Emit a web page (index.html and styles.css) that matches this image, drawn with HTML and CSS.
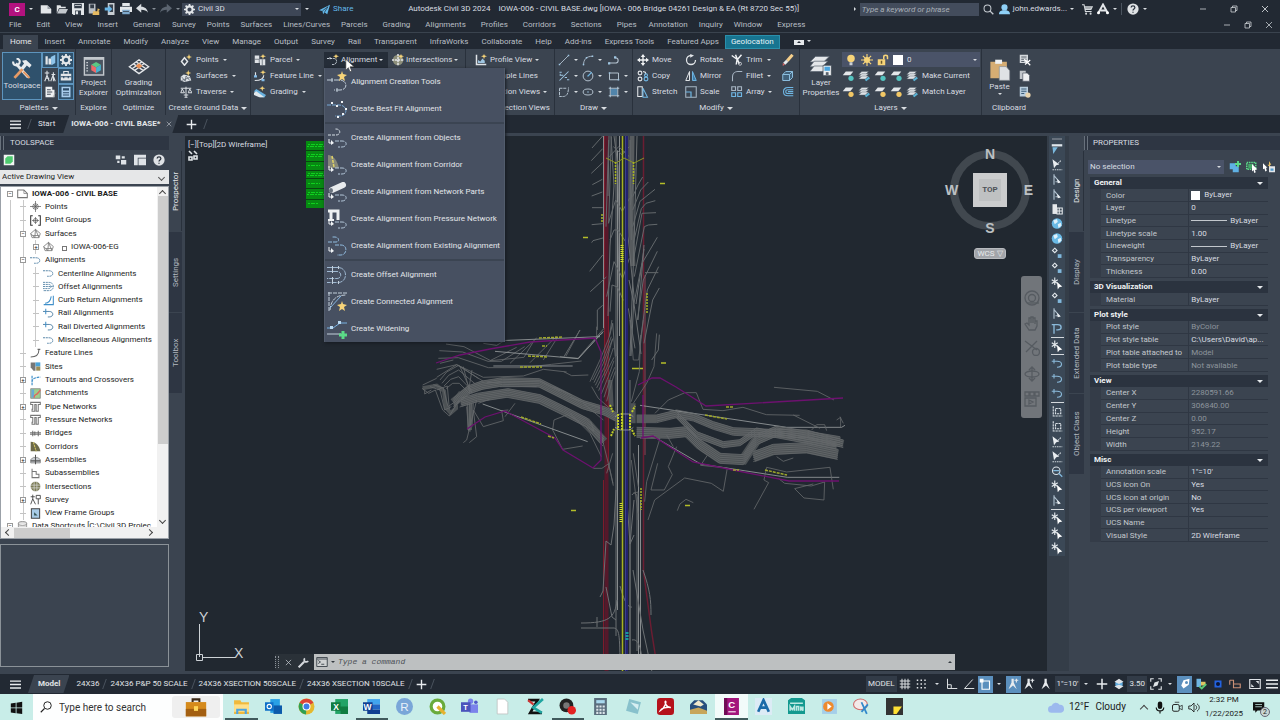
FILE: index.html
```html
<!DOCTYPE html>
<html lang="en">
<head>
<meta charset="utf-8">
<title>Autodesk Civil 3D 2024 - IOWA-006 - CIVIL BASE.dwg</title>
<link rel="stylesheet" href="styles.css">
</head>
<body>
<svg class="sprite" aria-hidden="true">
  <defs>
    <symbol id="new" viewBox="0 0 16 16"><path fill="#e3e6e9" d="M1 3h9l5 5v6H1z"/><path fill="#9aa1a9" d="M10 3v5h5z"/></symbol>
    <symbol id="open" viewBox="0 0 16 16"><path fill="#e3e6e9" d="M1 14V3h5l1 2h6v2H4z"/><path fill="#c3c8cd" d="M4.500 8H16l-3 6H1.500z"/></symbol>
    <symbol id="save" viewBox="0 0 16 16"><path fill="#e3e6e9" d="M0 0h16v16H2l-2-2z"/><path fill="#333c48" d="M3 1h10v6H3zM4 10h8v6H4z"/><path fill="#e3e6e9" d="M5 11h3v4H5zM4 3h8v1H4z"/></symbol>
    <symbol id="saveas" viewBox="0 0 16 16"><path fill="#b9bec4" d="M1 1h9v13H1z"/><path fill="#333c48" d="M3 2h5v5H3z"/><path fill="#e6ba62" d="M7 11h8v5H6zM13 7l3 2-4 3z"/></symbol>
    <symbol id="phone" viewBox="0 0 16 16"><path fill="#c8cdd2" d="M5 0h9v16H5z"/><path fill="#39434f" d="M7 2h5v10H7z"/><path fill="#69b6e8" d="M1 6h5V3l5 5-5 5v-3H1z"/></symbol>
    <symbol id="print" viewBox="0 0 16 16"><path fill="#e3e6e9" d="M3 0h10v5H3zM0 5h16v7H0z"/><path fill="#7ea9cc" d="M3 9h10v6H3z"/><path fill="#333c48" d="M3 4h10v1H3zM4 11h8v1H4z"/></symbol>
    <symbol id="undo" viewBox="0 0 16 16"><path fill="currentColor" d="M0 7l7-6v4c5 0 8 3 9 8-2-3-5-4-9-4v4z"/></symbol>
    <symbol id="redo" viewBox="0 0 16 16"><path fill="currentColor" d="M16 7L9 1v4C4 5 1 8 0 13c2-3 5-4 9-4v4z"/></symbol>
    <symbol id="gear" viewBox="0 0 16 16"><circle cx="8" cy="8" r="4.500" fill="none" stroke="#e3e6e9" stroke-width="3"/><path stroke="#e3e6e9" stroke-width="2.500" d="M8 0v3M8 13v3M0 8h3M13 8h3M2.300 2.300l2 2M11.700 11.700l2 2M2.300 13.700l2-2M11.700 4.300l2-2"/></symbol>
    <symbol id="plane" viewBox="0 0 16 16"><path fill="#62b8ea" d="M0 9L16 1l-4 14-4-3-2 3-1-5z"/><path stroke="#222933" d="M5 10l8-6-5 8" fill="none"/></symbol>
    <symbol id="find" viewBox="0 0 16 16"><circle cx="6.500" cy="6.500" r="5" fill="none" stroke="currentColor" stroke-width="1.500"/><path stroke="currentColor" stroke-width="2" d="M10 10l5 5"/></symbol>
    <symbol id="user" viewBox="0 0 16 16"><circle cx="8" cy="5" r="4.500" fill="#8fd0f7"/><path fill="#8fd0f7" d="M0 15c0-5 3-5 5-6h6c2 1 5 1 5 6z"/></symbol>
    <symbol id="cart" viewBox="0 0 16 16"><path fill="none" stroke="#d5d9dd" stroke-width="1.600" d="M0 1h3l2 10h9M4 4h11l-2 4H5M4 6h10"/><circle cx="6" cy="14" r="1.500" fill="#d5d9dd"/><circle cx="12.500" cy="14" r="1.500" fill="#d5d9dd"/></symbol>
    <symbol id="adsk" viewBox="0 0 16 16"><path fill="none" stroke="#e3e6e9" stroke-width="2.600" d="M2 13L8 2l6 11M5 10h7"/><circle cx="2" cy="13" r="2" fill="#fff"/><circle cx="14" cy="13" r="2" fill="#fff"/></symbol>
    <symbol id="help" viewBox="0 0 16 16"><circle cx="8" cy="8" r="7.500" fill="#dfe2e5"/><path fill="none" stroke="#2b333e" stroke-width="1.700" d="M5.500 6c0-3 5-3 5 0 0 2-2.500 2-2.500 4M8 11.500v1.500"/></symbol>
    <symbol id="min" viewBox="0 0 16 16"><path stroke="#d5d9dd" stroke-width="1.500" d="M2 8h12"/></symbol>
    <symbol id="max" viewBox="0 0 16 16"><path fill="none" stroke="#d5d9dd" stroke-width="1.500" d="M2 5h9v9H2zM5 5V2h9v9h-3"/></symbol>
    <symbol id="x" viewBox="0 0 16 16"><path stroke="currentColor" stroke-width="1.700" d="M2 2l12 12M14 2L2 14"/></symbol>
    <symbol id="tools" viewBox="0 0 32 32"><path stroke="#e8ebee" stroke-width="4" d="M7 8l18 20"/><path stroke="#e59a66" stroke-width="4" d="M5 29l12-13"/><path fill="#e8ebee" d="M16 4l6-1 8 7-3 4-4-3-5 6-4-3 5-6z"/><path fill="none" stroke="#e8ebee" stroke-width="3" d="M3 5c0 6 5 7 8 4s2-8-3-8"/><path stroke="#e59a66" stroke-width="3" d="M18 20l9 9"/></symbol>
    <symbol id="pal1" viewBox="0 0 16 16"><path fill="#e3e6e9" d="M2 3h3v11H2zM6 6h4v8H6z"/><path fill="#8fc4ea" d="M9 4l6-3v11l-5 3z"/></symbol>
    <symbol id="survey" viewBox="0 0 16 16"><path fill="none" stroke="#dfe3e7" stroke-width="1.400" d="M1 4h6M4 1v6M1 15l3-8 3 8M10 6h5M12.500 3v12M9 15l3-8 3 8M2 11h5"/></symbol>
    <symbol id="case" viewBox="0 0 16 16"><path fill="#e3e6e9" d="M1 5h14v9H1z"/><path fill="none" stroke="#e3e6e9" stroke-width="1.500" d="M5 5V2h6v3"/><path stroke="#2b4b68" stroke-width="1.500" d="M1 9h14M5 8v3M11 8v3"/></symbol>
    <symbol id="sheet" viewBox="0 0 16 16"><path fill="#eef0f2" d="M2 1h9v4h3v10H2z"/><path stroke="#434c58" stroke-width="1.300" d="M4 5h5M4 8h7M4 11h5"/><path stroke="#aaa" d="M12 15l3-6"/></symbol>
    <symbol id="calc" viewBox="0 0 16 16"><path fill="#a9cdec" d="M2 1h12v14H2z"/><path fill="#2c4a66" d="M4 3h8v3H4z"/><path stroke="#2c4a66" stroke-width="1.500" d="M4 9h8M4 12h8"/></symbol>
    <symbol id="cube" viewBox="0 0 32 32"><path fill="#4b5561" stroke="#c3c8cd" stroke-width="2" d="M2 4h28v25H2z"/><path fill="#c3c8cd" d="M2 3h28v4H2z"/><path stroke="#dfe3e7" stroke-width="2" stroke-dasharray="2 2" d="M6 10v16"/><path fill="#5bc884" d="M12 14l7-4 7 4-7 4z"/><path fill="#ed6a6a" d="M12 14l7 4v8l-7-4z"/><path fill="#48b2cf" d="M26 14l-7 4v8l7-4z"/></symbol>
    <symbol id="grade" viewBox="0 0 32 32"><path fill="none" stroke="#e4e7ea" stroke-width="2" d="M2 17L16 7l14 10-14 10zM8 13l15 10M24 12L9 23M12 10l14 10M20 10L6 20"/><path fill="#e88f55" d="M16 12l5 4-5 4-5-4z"/></symbol>
    <symbol id="points" viewBox="0 0 16 16"><path fill="none" stroke="#e3e6e9" stroke-width="2" d="M6 5l4 5-4 5-4-5z"/><path fill="#f7d479" d="M12 0l1 3 3 1-3 1-1 3-1-3-3-1 3-1z"/></symbol>
    <symbol id="surf" viewBox="0 0 16 16"><path fill="#dfe3e7" d="M1 9l4-3 8 2 2 6-9 2-5-2z"/><path stroke="#59626e" fill="none" d="M2 9l5 6 1-7 5 6M2 14l11-4"/><path fill="#f7d479" d="M11 0l1 3 3 1-3 1-1 3-1-3-3-1 3-1z"/></symbol>
    <symbol id="trav" viewBox="0 0 16 16"><path fill="none" stroke="#dfe3e7" stroke-width="1.300" d="M1 3h14M8 1v14M3 4L1 9h5zM13 4l-2 5h5zM5 12h6M6 15h4"/></symbol>
    <symbol id="parcel" viewBox="0 0 16 16"><path fill="#dfe3e7" d="M1 2h6v5h8v8H8v-3H1z"/><path stroke="#59626e" d="M1 7h6v5M11 7v8" fill="none"/><path fill="#f7d479" d="M12 0l1 2 3 1-3 1-1 3-1-3-3-1 3-1z"/></symbol>
    <symbol id="feat" viewBox="0 0 16 16"><path fill="none" stroke="#dfe3e7" stroke-width="1.500" d="M2 3v5M1 14c8 0 12-3 12-7"/><path fill="#84bdea" d="M0 7h4v3H0zM10 12h4v3h-4z"/><path fill="#f7d479" d="M12 0l1 2 3 1-3 1-1 3-1-3-3-1 3-1z"/></symbol>
    <symbol id="grading" viewBox="0 0 16 16"><path fill="#69b2df" d="M0 7l3-3 13 8-2 3H8z"/><path fill="#e1e8ec" d="M0 9l3-2 11 8H7L0 12z"/><path fill="#f7d479" d="M11 0l1 2 3 1-3 1-1 3-1-3-3-1 3-1z"/></symbol>
    <symbol id="align" viewBox="0 0 16 16"><path fill="none" stroke="#cdd5dd" stroke-width="1.300" stroke-dasharray="3 1" d="M0 6h9c5 0 5 7 0 8H6M4 4v4"/><path fill="#f7d479" d="M12 0l1 2 3 1-3 1-1 3-1-3-3-1 3-1z"/></symbol>
    <symbol id="inter" viewBox="0 0 16 16"><circle cx="8" cy="8" r="7" fill="#8d8f7b"/><path stroke="#e3e6e9" stroke-width="2" stroke-dasharray="3 1" d="M0 8h16M8 0v16"/><path fill="#f7d479" d="M12 0l1 2 3 1-3 1-1 3-1-3-3-1 3-1z"/></symbol>
    <symbol id="profv" viewBox="0 0 16 16"><path fill="none" stroke="#dfe3e7" stroke-width="2" d="M2 1v13h13"/><path fill="#9fc6e2" d="M4 12V8l3 2 3-4 3 3v3z"/><path fill="#f7d479" d="M12 0l1 2 3 1-3 1-1 3-1-3-3-1 3-1z"/></symbol>
    <symbol id="line" viewBox="0 0 16 16"><path stroke="#a8b6c4" stroke-width="1.300" d="M2 14L14 2"/><path fill="#9fc6e2" d="M1 13h2v2H1zM13 1h2v2h-2z"/></symbol>
    <symbol id="arc" viewBox="0 0 16 16"><path fill="none" stroke="#a8b6c4" stroke-width="1.300" d="M2 15C2 7 6 3 14 3"/><path fill="#9fc6e2" d="M1 13h2v2H1zM5 4h2v2H5zM13 2h2v2h-2z"/></symbol>
    <symbol id="pline" viewBox="0 0 16 16"><path fill="none" stroke="#b5c3d0" stroke-width="1.500" d="M1 12h8c6 0 6-7 0-7"/><path fill="#9fc6e2" d="M0 11h3v3H0zM8 3h3v3H8z"/></symbol>
    <symbol id="rays" viewBox="0 0 16 16"><path fill="none" stroke="#9fc6e2" stroke-width="1.400" d="M2 14L14 2M2 3h3M4 7h3M9 10h3M12 13h3M3 5v3"/></symbol>
    <symbol id="circle" viewBox="0 0 16 16"><circle cx="8" cy="8" r="6.500" fill="none" stroke="#b5c3d0" stroke-width="1.300"/><path stroke="#6fb6e3" stroke-width="1.500" d="M8 8l5-5M7 8h2"/></symbol>
    <symbol id="rect" viewBox="0 0 16 16"><path fill="none" stroke="#b5c3d0" stroke-width="1.300" d="M2 4h12v9H2z"/><path fill="#9fc6e2" d="M1 3h2v2H1zM13 12h2v2h-2z"/></symbol>
    <symbol id="spl" viewBox="0 0 16 16"><path fill="none" stroke="#b5c3d0" stroke-width="1.300" d="M2 3v11h5c6 0 7-7 7-12M2 3h9" stroke-dasharray="4 1"/></symbol>
    <symbol id="ell" viewBox="0 0 16 16"><ellipse cx="8" cy="8" rx="6.500" ry="4" fill="none" stroke="#b5c3d0" stroke-width="1.300"/><circle cx="8" cy="8" r="1" fill="#9fc6e2"/></symbol>
    <symbol id="hatch" viewBox="0 0 16 16"><path fill="#5185ab" d="M4 4h8v8H4z"/><path fill="none" stroke="#bcd2e2" stroke-width="1.200" d="M1 3h14M1 13h14M3 1v14M13 1v14"/></symbol>
    <symbol id="move" viewBox="0 0 16 16"><path stroke="#f0f2f4" stroke-width="1.800" d="M8 2v12M2 8h12"/><path fill="#f0f2f4" d="M8 0l3 4H5zM8 16l3-4H5zM0 8l4-3v6zM16 8l-4-3v6z"/></symbol>
    <symbol id="copy" viewBox="0 0 16 16"><g fill="none" stroke-width="1.500"><circle cx="4" cy="4" r="2.500" stroke="#e3e6e9"/><circle cx="4" cy="12" r="2.500" stroke="#e3e6e9"/><path stroke="#e3e6e9" d="M8 2l3 1 1 3"/><circle cx="12" cy="12" r="2.500" stroke="#6fb6e3"/><circle cx="12" cy="7" r="2" stroke="#6fb6e3"/></g></symbol>
    <symbol id="stretch" viewBox="0 0 16 16"><path fill="none" stroke="#e3e6e9" stroke-width="1.400" d="M1 1h6v13H1zM1 14h6"/><path fill="none" stroke="#6fb6e3" stroke-width="1.400" d="M8 3l6 12H8z"/></symbol>
    <symbol id="rotate" viewBox="0 0 16 16"><path fill="none" stroke="#e3e6e9" stroke-width="1.700" d="M8 2a6 6 0 1 0 6 6"/><path fill="#e3e6e9" d="M7 0l5 2-5 3z"/></symbol>
    <symbol id="mirror" viewBox="0 0 16 16"><path fill="none" stroke="#e3e6e9" stroke-width="1.300" d="M6 2v12H1z"/><path fill="#3f7ba6" stroke="#6fb6e3" stroke-width="1.300" d="M10 2v12h5z"/></symbol>
    <symbol id="scale" viewBox="0 0 16 16"><path fill="none" stroke="#a8b6c4" stroke-width="1.400" d="M1 1h14v14H1z"/><path fill="none" stroke="#6fb6e3" stroke-width="1.600" d="M1 8h7v7"/></symbol>
    <symbol id="trim" viewBox="0 0 16 16"><path fill="none" stroke="#f0f2f4" stroke-width="2" d="M1 2l7 5M6 1l5 12M14 1L8 8l-1 6"/><circle cx="12" cy="13" r="2" fill="none" stroke="#e3e6e9"/></symbol>
    <symbol id="fillet" viewBox="0 0 16 16"><path fill="none" stroke="#a8b6c4" stroke-width="1.400" d="M2 15V9c0-4 3-7 7-7h6"/></symbol>
    <symbol id="array" viewBox="0 0 16 16"><path fill="none" stroke="#a8b6c4" stroke-width="1.500" d="M1 1h5v5H1zM9 1h5v5H9z"/><path fill="none" stroke="#6fb6e3" stroke-width="1.500" d="M1 9h5v5H1zM9 9h5v5H9z"/></symbol>
    <symbol id="erase" viewBox="0 0 16 16"><path stroke="#f5cf8b" stroke-width="4" d="M14 1L7 9"/><path stroke="#e8eaec" stroke-width="4" d="M7 9l-4 4"/><path fill="#d76464" d="M1 12l3 2-3 2z"/></symbol>
    <symbol id="explode" viewBox="0 0 16 16"><path fill="#41617a" stroke="#8dbfe0" stroke-width="1.300" d="M1 6l4-4h9v8l-4 4H1zM1 6h9v8M10 6l4-4"/></symbol>
    <symbol id="offset" viewBox="0 0 16 16"><path fill="none" stroke="#6fb6e3" stroke-width="1.400" d="M15 2H8C0 2 0 13 8 13h7M15 5H8c-4 0-4 5 0 5h7M8 7.500h7"/></symbol>
    <symbol id="layers" viewBox="0 0 32 32"><g fill="#e4e7ea" stroke="#596370"><path d="M8 2h20l-8 8H0z"/><path d="M6 9h20l-8 8H0z"/><path d="M6 16h20l-8 8H0z"/></g><path fill="#eef1f3" stroke="#3b4450" d="M19 15h12v15H19z"/><path fill="#49a4df" d="M21 17h8v6h-8z"/><path fill="#59616c" d="M23 25h4v4h-4z"/></symbol>
    <symbol id="layA" viewBox="0 0 16 16"><g fill="#dfe3e7" stroke="#5a636e" stroke-width=".6"><path d="M5 2h9l-4 4H1z"/><path d="M5 5h9l-4 4H1z"/><path d="M5 8h9l-4 4H1z"/></g><path fill="#5ab3d5" d="M9 13l5-4 2 2-5 4z"/></symbol>
    <symbol id="layB" viewBox="0 0 16 16"><path fill="#e4e7ea" d="M5 2h10l-4 5H1z"/><circle cx="12" cy="11" r="3.500" fill="#54c3c0"/></symbol>
    <symbol id="layC" viewBox="0 0 16 16"><path fill="#e4e7ea" d="M5 2h10l-4 5H1z"/><circle cx="12" cy="11" r="3.500" fill="#f2c765"/></symbol>
    <symbol id="bulb" viewBox="0 0 16 16"><circle cx="8" cy="6" r="5" fill="#f7d479"/><path fill="#c9ced3" d="M6 11h4v4H6z"/></symbol>
    <symbol id="sun" viewBox="0 0 16 16"><circle cx="8" cy="8" r="4" fill="#f7d479"/><path stroke="#f7d479" stroke-width="1.500" d="M8 0v16M0 8h16M2.500 2.500l11 11M13.500 2.500l-11 11"/></symbol>
    <symbol id="lock" viewBox="0 0 16 16"><path fill="#f7d479" d="M1 7h10v8H1z"/><path fill="none" stroke="#f7d479" stroke-width="2" d="M9 7V4c0-3 5-3 5 0v3"/><path fill="#6b5a2a" d="M5 9h2v4H5z"/></symbol>
    <symbol id="paste" viewBox="0 0 32 32"><path fill="#d6ad73" d="M2 4h24v24H2z"/><path fill="#eef0f2" d="M9 1h10v6H9z"/><path fill="#dfe2e5" stroke="#8b8f95" d="M15 11h10l5 6v14H15z"/></symbol>
    <symbol id="cut" viewBox="0 0 16 16"><path fill="#d5d9dd" d="M1 1h11v11H1z"/><path stroke="#49525d" stroke-width="1.200" d="M3 4h7M3 7h7M3 10h4"/><path stroke="#fff" stroke-width="1.600" d="M7 7l8 8M15 8l-7 6"/></symbol>
    <symbol id="docs" viewBox="0 0 16 16"><path fill="#c1c6cb" d="M1 1h8v11H1z"/><path fill="#eef0f2" stroke="#555e69" d="M5 4h6l3 3v8H5z"/></symbol>
    <symbol id="list" viewBox="0 0 16 16"><path fill="#b9cddd" d="M1 1h11v13H1z"/><path stroke="#3b5c78" stroke-width="1.400" d="M3 4h7M3 7h7M3 10h4"/><circle cx="12" cy="12" r="3.500" fill="#e8d3ac"/></symbol>
    <symbol id="burger" viewBox="0 0 16 16"><path stroke="#e8ebee" stroke-width="2" d="M0 3h16M0 8h16M0 13h16"/></symbol>
    <symbol id="plus" viewBox="0 0 16 16"><path stroke="#e8ebee" stroke-width="2" d="M1 8h14M8 1v14"/></symbol>

    <symbol id="m1" viewBox="0 0 20 20" overflow="visible"><path fill="none" stroke="#c3cfdb" stroke-dasharray="6 1" d="M0 8h12c9 0 9 10 1 10H7M5 6v4M10 16v4"/><path fill="#f7d479" d="M15-1l1 3 4 1-3 2 1 4-3-2-3 2 1-4-3-2 4-1z"/></symbol>
    <symbol id="m2" viewBox="0 0 20 20"><path fill="none" stroke="#79a9d6" stroke-dasharray="4 1" d="M0 6h12c9 0 9 11 1 11H8"/><path fill="#f0f3f6" d="M4 3h2v2H4zM9 6h2v2H9zM14 2h2v2h-2zM18 9h2v2h-2zM15 14h2v2h-2zM10 17h2v2h-2z"/></symbol>
    <symbol id="from" viewBox="0 0 20 20"><path fill="none" stroke="#b4c7da" stroke-dasharray="4 1" d="M8 13h7c6 0 5 6 0 6h-4"/><path fill="none" stroke="#f0f3f6" d="M2 11v4h3"/><path fill="#f0f3f6" d="M4 12l3 3-3 2z"/></symbol>
    <symbol id="m3" viewBox="0 0 20 20"><path fill="none" stroke="#d6dee6" stroke-dasharray="3 1" d="M1 7h8c5 0 5-6 0-6H8"/><use href="#from"/></symbol>
    <symbol id="m4" viewBox="0 0 20 20"><path fill="#85877a" d="M1 0c5 0 9 5 11 13H1z"/><path stroke="#e2d465" stroke-dasharray="3 1" d="M5 1l2 11" stroke-width="1.500"/><use href="#from"/></symbol>
    <symbol id="m5" viewBox="0 0 20 20"><path stroke="#e8ebee" stroke-width="6" stroke-linecap="round" d="M5 8l11-5"/><ellipse cx="4" cy="8.500" rx="2" ry="2.500" fill="#69727e"/><use href="#from"/></symbol>
    <symbol id="m6" viewBox="0 0 20 20"><path fill="none" stroke="#eef1f3" stroke-width="3" d="M1 2h10v9M4 2v9"/><path stroke="#eef1f3" stroke-width="2" d="M1 11h6"/><use href="#from"/></symbol>
    <symbol id="m7" viewBox="0 0 20 20"><path fill="none" stroke="#91bce0" stroke-dasharray="4 1" d="M1 6h8c4 0 3-5-1-5H5M8 9h6c7 0 6 10 0 10h-4"/><path fill="none" stroke="#f0f3f6" d="M2 11v4h3"/><path fill="#f0f3f6" d="M4 12l3 3-3 2z"/></symbol>
    <symbol id="m8" viewBox="0 0 20 20"><path fill="none" stroke="#9fb9d2" d="M0 2.500h11c10 0 10 15 0 15H0M0 6.500h10c5 0 5 7 0 7H0" stroke-dasharray="5 1"/><path fill="none" stroke="#c3cfdb" d="M5.500 1v7M5.500 12v7M11.500 1v3M11.500 16v3"/></symbol>
    <symbol id="m9" viewBox="0 0 20 20"><path fill="none" stroke="#c3cfdb" stroke-dasharray="4 1" d="M1 1h19M2 0v19M3 18C4 7 10 3 19 3"/><path stroke="#85b6e1" d="M3 16L14 4"/><path fill="#f7d479" d="M15 9l1 3 4 1-3 2 1 4-3-2-3 2 1-4-3-2 4-1z"/></symbol>
    <symbol id="m10" viewBox="0 0 20 20"><path fill="none" stroke="#78b1e2" d="M0 9h6l7-5h7"/><path stroke="#c3cfdb" d="M0 15h14"/><path fill="#b9d9f2" d="M3 7h3v3H3zM11 2h3v3h-3z"/><path stroke="#5bdb88" stroke-width="3" d="M16 12v8M12 16h8"/></symbol>

    <symbol id="tPt" viewBox="0 0 16 16"><circle cx="8" cy="8" r="4" fill="none" stroke="#555"/><path stroke="#555" d="M8 0v16M0 8h16M5 5l6 6M11 5l-6 6"/></symbol>
    <symbol id="tPg" viewBox="0 0 16 16"><path fill="none" stroke="#333" stroke-width="1.500" d="M4 1H1v14h3M12 1h3v14h-3"/><circle cx="8" cy="8" r="3" fill="none" stroke="#555"/><path stroke="#555" d="M8 3v10M3 8h10"/></symbol>
    <symbol id="tDoc" viewBox="0 0 16 16"><path fill="#fff" stroke="#777" stroke-width="1.500" d="M1 3h9l5 5v6H1z"/><path fill="none" stroke="#777" d="M10 3v5h5"/></symbol>
    <symbol id="tSurf" viewBox="0 0 16 16"><path fill="none" stroke="#777" stroke-width="1.200" d="M1 8l7-6 7 6-2 6H3zM1 8l6 6 1-12 5 12M4 11h9"/></symbol>
    <symbol id="tAl" viewBox="0 0 16 16"><path fill="none" stroke="#47799f" stroke-width="1.300" stroke-dasharray="3 1" d="M0 4h9c7 0 7 8 0 8H6"/></symbol>
    <symbol id="tRail" viewBox="0 0 16 16"><path fill="none" stroke="#47799f" stroke-width="1.300" d="M0 5h9c7 0 7 8 0 8H7"/><path stroke="#3f8fc9" stroke-width="1.500" d="M4 1v8"/></symbol>
    <symbol id="tOff" viewBox="0 0 16 16"><path fill="none" stroke="#47799f" stroke-width="1.200" stroke-dasharray="3 1" d="M0 2h9c8 0 8 12 0 12H0M0 5h8c5 0 5 6 0 6H0M0 8h14"/></symbol>
    <symbol id="tCurb" viewBox="0 0 16 16"><path fill="none" stroke="#3f8fc9" stroke-width="1.500" d="M1 14h14V1M3 12c6 0 8-4 9-10"/></symbol>
    <symbol id="tFeat" viewBox="0 0 16 16"><path fill="none" stroke="#666" stroke-width="1.500" d="M1 13c8 0 12-3 12-11M11 2h4"/></symbol>
    <symbol id="tSite" viewBox="0 0 16 16"><path fill="#777" d="M1 2h7v12H5L1 9z"/><path fill="#4aa3d8" d="M8 2h7v6H8z"/><path fill="#9a8c57" d="M9 8h6v6H9z"/></symbol>
    <symbol id="tTurn" viewBox="0 0 16 16"><path fill="none" stroke="#3f8fc9" stroke-width="1.700" d="M3 1v14M3 10c0-5 4-6 12-7" stroke-dasharray="4 1"/></symbol>
    <symbol id="tCat" viewBox="0 0 16 16"><path fill="#9fce8d" stroke="#777" d="M1 1h14v14H1z"/><path fill="#6aa9d6" d="M2 2h4v12H2z"/><path stroke="#df675f" stroke-width="2" fill="none" d="M6 14c0-6 3-3 5-6l4-5"/></symbol>
    <symbol id="tPipe" viewBox="0 0 16 16"><path fill="none" stroke="#777" stroke-width="1.500" d="M1 2h14v3h-3v10H9V5H7v10H3v-3h1V5H1z"/></symbol>
    <symbol id="tBr" viewBox="0 0 16 16"><path fill="none" stroke="#666" stroke-width="1.400" d="M0 7h16M0 9h16M4 4v8M12 4v8M7 5v6"/></symbol>
    <symbol id="tCor" viewBox="0 0 16 16"><path fill="#6c6a4a" d="M1 1c8 0 13 7 14 14H1z"/><path stroke="#d6c862" stroke-width="1.500" stroke-dasharray="3 1" d="M5 2l4 13"/></symbol>
    <symbol id="tAsm" viewBox="0 0 16 16"><path fill="#c8ccd1" stroke="#777" d="M1 8l4-3h6l4 3v5H1z"/><path stroke="#555" stroke-width="1.500" d="M8 1v14M1 10h14"/></symbol>
    <symbol id="tSub" viewBox="0 0 16 16"><path fill="none" stroke="#777" stroke-width="1.500" d="M3 1v14M3 5h6v4h4v5H3"/></symbol>
    <symbol id="tInt" viewBox="0 0 16 16"><circle cx="8" cy="8" r="7" fill="#7c7c55"/><path stroke="#ddd" d="M0 6h16M0 10h16M6 0v16M10 0v16"/></symbol>
    <symbol id="tSv" viewBox="0 0 16 16"><path fill="none" stroke="#444" stroke-width="1.300" d="M1 4h6M4 1v6M1 15l3-8 4 8M9 2h6v5H9zM12 7v8"/></symbol>
    <symbol id="tVf" viewBox="0 0 16 16"><path fill="#a8cbe6" stroke="#444" stroke-width="1.500" d="M2 1h12v14H2z"/><path fill="#355" d="M6 6l5 5H6z"/></symbol>
    <symbol id="tDb" viewBox="0 0 16 16"><path fill="#ddd" stroke="#777" d="M2 3c0-3 12-3 12 0v12H2zM2 4c0 3 12 3 12 0"/></symbol>

    <symbol id="snapA" viewBox="0 0 16 16"><path fill="#dfe6ec" d="M1 1h14v3H1z"/><path fill="#7ab9df" d="M2 5h7l-6 9z"/></symbol>
    <symbol id="snapB" viewBox="0 0 16 16"><path fill="#e9edf0" d="M2 1l9 7-4 1-3 4z"/><path stroke="#cfd6dc" stroke-dasharray="2 1" stroke-width="1.500" d="M2 15h13M13 3l-5 5"/></symbol>
    <symbol id="snapC" viewBox="0 0 16 16"><path fill="none" stroke="#aebfcd" stroke-width="1.500" d="M4 1v14M4 3l7 8H6"/><path fill="#e9edf0" d="M8 7l5 5-4 1z"/></symbol>
    <symbol id="snapP" viewBox="0 0 16 16"><path fill="none" stroke="#8ab9d9" stroke-width="1.800" d="M1 3h8c6 0 6 7 0 7H7M4 3v12"/></symbol>
    <symbol id="snapD" viewBox="0 0 16 16"><path fill="none" stroke="#e3e8ec" stroke-width="1.500" d="M5 1l3 3-3 3-3-3z"/><path fill="#81b8dc" d="M9 9h5v5H9z"/></symbol>
    <symbol id="snapE" viewBox="0 0 16 16"><path fill="none" stroke="#e3e8ec" stroke-width="1.500" d="M5 0v10M1 3l8 5M9 3L1 8"/><path fill="#fff" d="M8 6l7 6-4 1-2 3z"/></symbol>
    <symbol id="snapF" viewBox="0 0 16 16"><path fill="none" stroke="#8ab9d9" stroke-width="1.500" d="M1 5h7c8 0 8 8 0 8M4 2v6"/></symbol>
    <symbol id="snapG" viewBox="0 0 16 16"><path fill="none" stroke="#dbe2e8" stroke-width="1.500" stroke-dasharray="3 1" d="M3 1v13h12M6 4h7v7H6z"/></symbol>
    <symbol id="snapH" viewBox="0 0 16 16"><circle cx="7" cy="7" r="5" fill="none" stroke="#dbe2e8" stroke-width="1.500"/><path stroke="#81b8dc" stroke-width="1.700" d="M3 7h8M10 10l5 5"/></symbol>
    <symbol id="globe" viewBox="0 0 16 16"><circle cx="8" cy="8" r="7" fill="#69b9e5"/><path fill="#dff1fa" d="M3 4l5-2 1 4-4 3zM9 9l4-2 1 4-4 3z"/></symbol>
    <symbol id="table" viewBox="0 0 16 16"><path fill="#e6e9ec" d="M2 1h6v13H2z"/><path fill="none" stroke="#e6e9ec" stroke-width="1.400" d="M8 6h7v8H8zM8 10h7M11 6v8"/></symbol>

    <symbol id="anno" viewBox="0 0 16 16"><path fill="#e8ebee" d="M6 1h3v5l4 9-5-5-6 5 4-9z"/></symbol>
    <symbol id="annox" viewBox="0 0 16 16"><path fill="#e8ebee" d="M6 1h3v5l4 9-5-5-6 5 4-9z"/><path stroke="#e8ebee" stroke-width="1.500" d="M10 3h5M12.500 1v5"/></symbol>
    <symbol id="tag" viewBox="0 0 16 16"><path fill="#fff" d="M3 10l3-7 8-2-1 8-7 5z"/><circle cx="10" cy="6" r="2" fill="#5b8fbd"/></symbol>
    <symbol id="gridi" viewBox="0 0 16 16"><path stroke="#dfe2e5" stroke-width="1.300" d="M4 1v14M8 1v14M12 1v14M1 4h14M1 8h14M1 12h14"/></symbol>
    <symbol id="dots" viewBox="0 0 16 16"><path stroke="#dfe2e5" stroke-width="2" stroke-dasharray="2 3" d="M1 3h14M1 8h14M1 13h14"/></symbol>
    <symbol id="ortho" viewBox="0 0 16 16"><path fill="none" stroke="#dfe2e5" stroke-width="1.300" d="M2 1v13h13M2 9h5v5"/></symbol>
    <symbol id="polar" viewBox="0 0 16 16"><path fill="none" stroke="#dfe2e5" stroke-width="1.300" d="M13 2L2 14h13"/></symbol>
    <symbol id="osnap" viewBox="0 0 16 16"><path fill="none" stroke="#fff" stroke-width="1.500" d="M4 4h10v11H4z"/><path fill="#fff" d="M1 1h5v5H1z"/></symbol>
  </defs>
</svg>

<header class="titlebar">
  <button class="applogo" aria-label="Application menu">C</button><i class="car"></i>
  <div class="quick">
    <svg class="i"><use href="#new"/></svg><svg class="i"><use href="#open"/></svg><svg class="i"><use href="#save"/></svg><svg class="i"><use href="#saveas"/></svg><svg class="i"><use href="#phone"/></svg><svg class="i"><use href="#print"/></svg>
    <svg class="i"><use href="#undo"/></svg><i class="car dim"></i><svg class="i off"><use href="#redo"/></svg><i class="car dim"></i>
  </div>
  <button class="workspace"><svg class="i"><use href="#gear"/></svg><span>Civil 3D</span><i class="car"></i></button>
  <i class="car"></i>
  <a class="share" href="#"><svg class="i"><use href="#plane"/></svg>Share</a>
  <div class="doctitle"><span>Autodesk Civil 3D 2024</span><span>IOWA-006 - CIVIL BASE.dwg [IOWA - 006 Bridge 04261 Design &amp; EA (Rt 8720 Sec 55)]</span></div>
  <i class="car side"></i>
  <input class="keyword" type="text" placeholder="Type a keyword or phrase" aria-label="Search help">
  <svg class="i pale"><use href="#find"/></svg>
  <button class="account"><svg class="i"><use href="#user"/></svg>john.edwards...<i class="car"></i></button>
  <svg class="i"><use href="#cart"/></svg>
  <span class="pair"><svg class="i"><use href="#adsk"/></svg><i class="car"></i></span>
  <span class="pair helpbox"><svg class="i"><use href="#help"/></svg><i class="car"></i></span>
  <div class="wins"><svg class="w"><use href="#min"/></svg><svg class="w"><use href="#max"/></svg><svg class="w"><use href="#x"/></svg></div>
</header>

<nav class="menubar">
  <div class="wide"><a href="#">File</a><a href="#">Edit</a><a href="#">View</a><a href="#">Insert</a><a href="#">General</a></div>
  <div class="tight"><a href="#">Survey</a><a href="#">Points</a><a href="#">Surfaces</a><a href="#">Lines/Curves</a><a href="#">Parcels</a></div>
  <div class="wide"><a href="#">Grading</a><a href="#">Alignments</a><a href="#">Profiles</a><a href="#">Corridors</a><a href="#">Sections</a><a href="#">Pipes</a></div>
  <div class="tight"><a href="#">Annotation</a><a href="#">Inquiry</a><a href="#">Window</a></div>
  <div class="wide"><a href="#">Express</a></div>
  <div class="docwins"><svg class="w"><use href="#min"/></svg><svg class="w"><use href="#max"/></svg><svg class="w"><use href="#x"/></svg></div>
</nav>

<nav class="tabs">
  <button class="on">Home</button><button>Insert</button><button>Annotate</button><button>Modify</button><button>Analyze</button><button>View</button><button>Manage</button><button>Output</button><button>Survey</button><button>Rail</button><button>Transparent</button><button>InfraWorks</button><button>Collaborate</button><button>Help</button><button>Add-ins</button><button>Express Tools</button><button>Featured Apps</button><button class="geo">Geolocation</button>
  <span class="shrink"><i class="car up"></i></span><i class="car"></i>
</nav>

<section class="ribbon">
  <div class="panel palettes">
    <div class="body">
      <button class="big sel"><svg><use href="#tools"/></svg>Toolspace</button>
      <div class="minis"><svg class="i sel"><use href="#pal1"/></svg><svg class="i sel"><use href="#gear"/></svg><svg class="i"><use href="#survey"/></svg><svg class="i sel"><use href="#case"/></svg><svg class="i"><use href="#sheet"/></svg><svg class="i sel"><use href="#calc"/></svg></div>
    </div>
    <div class="name">Palettes<i class="car"></i></div>
  </div>
  <div class="panel explore"><div class="body"><button class="big"><svg><use href="#cube"/></svg>Project<br>Explorer</button></div><div class="name">Explore</div></div>
  <div class="panel optimize"><div class="body"><button class="big"><svg><use href="#grade"/></svg>Grading<br>Optimization</button></div><div class="name">Optimize</div></div>
  <div class="panel ground"><div class="body"><div class="rows">
    <button><svg class="i"><use href="#points"/></svg>Points<i class="car"></i></button>
    <button><svg class="i"><use href="#surf"/></svg>Surfaces<i class="car"></i></button>
    <button><svg class="i"><use href="#trav"/></svg>Traverse<i class="car"></i></button></div></div>
    <div class="name">Create Ground Data<i class="car"></i></div></div>
  <div class="panel design"><div class="body">
    <div class="rows first">
      <button><svg class="i"><use href="#parcel"/></svg>Parcel<i class="car"></i></button>
      <button><svg class="i"><use href="#feat"/></svg>Feature Line<i class="car"></i></button>
      <button><svg class="i"><use href="#grading"/></svg>Grading<i class="car"></i></button></div>
    <div class="rows anchor">
      <button class="open" aria-expanded="true"><svg class="i"><use href="#align"/></svg>Alignment<i class="car"></i></button>
      <div class="dropdown" role="menu">
        <button role="menuitem"><svg><use href="#m1"/></svg>Alignment Creation Tools</button>
        <button role="menuitem"><svg><use href="#m2"/></svg>Create Best Fit Alignment</button>
        <hr>
        <button role="menuitem"><svg><use href="#m3"/></svg>Create Alignment from Objects</button>
        <button role="menuitem"><svg><use href="#m4"/></svg>Create Alignment from Corridor</button>
        <button role="menuitem"><svg><use href="#m5"/></svg>Create Alignment from Network Parts</button>
        <button role="menuitem"><svg><use href="#m6"/></svg>Create Alignment from Pressure Network</button>
        <button role="menuitem"><svg><use href="#m7"/></svg>Create Alignment from Existing Alignment</button>
        <hr>
        <button role="menuitem"><svg><use href="#m8"/></svg>Create Offset Alignment</button>
        <button role="menuitem"><svg><use href="#m9"/></svg>Create Connected Alignment</button>
        <button role="menuitem"><svg><use href="#m10"/></svg>Create Widening</button>
      </div>
      <svg class="pointer" viewBox="0 0 12 16"><path fill="#fff" stroke="#333" stroke-width=".7" d="M1 0v13l3-3 2 5 2-1-2-5h5z"/></svg>
    </div>
    <div class="rows inters"><button><svg class="i"><use href="#inter"/></svg>Intersections<i class="car"></i></button></div>
  </div></div>
  <div class="panel profile"><div class="body"><div class="rows">
    <button><svg class="i"><use href="#profv"/></svg>Profile View<i class="car"></i></button>
    <button><svg class="i"></svg>Sample Lines</button>
    <button><svg class="i"></svg>Section Views<i class="car"></i></button></div></div>
    <div class="name">Profile &amp; Section Views</div></div>
  <div class="panel draw"><div class="body"><div class="drawgrid">
    <span><svg class="i"><use href="#line"/></svg><i class="car"></i></span><span><svg class="i"><use href="#arc"/></svg><i class="car"></i></span><span><svg class="i"><use href="#pline"/></svg></span>
    <span><svg class="i"><use href="#rays"/></svg><i class="car"></i></span><span><svg class="i"><use href="#circle"/></svg><i class="car"></i></span><span><svg class="i"><use href="#rect"/></svg><i class="car"></i></span>
    <span><svg class="i"><use href="#spl"/></svg><i class="car"></i></span><span><svg class="i"><use href="#ell"/></svg><i class="car"></i></span><span><svg class="i"><use href="#hatch"/></svg><i class="car"></i></span>
  </div></div><div class="name">Draw<i class="car"></i></div></div>
  <div class="panel modify"><div class="body"><div class="modgrid">
    <button><svg class="i"><use href="#move"/></svg>Move</button><button><svg class="i"><use href="#rotate"/></svg>Rotate</button><button><svg class="i"><use href="#trim"/></svg>Trim<i class="car"></i></button><svg class="i"><use href="#erase"/></svg>
    <button><svg class="i"><use href="#copy"/></svg>Copy</button><button><svg class="i"><use href="#mirror"/></svg>Mirror</button><button><svg class="i"><use href="#fillet"/></svg>Fillet<i class="car"></i></button><svg class="i"><use href="#explode"/></svg>
    <button><svg class="i"><use href="#stretch"/></svg>Stretch</button><button><svg class="i"><use href="#scale"/></svg>Scale</button><button><svg class="i"><use href="#array"/></svg>Array<i class="car"></i></button><svg class="i"><use href="#offset"/></svg>
  </div></div><div class="name">Modify<i class="car"></i></div></div>
  <div class="panel layers"><div class="body">
    <button class="big"><svg><use href="#layers"/></svg>Layer<br>Properties</button>
    <div class="rows">
      <button class="laycombo"><svg class="i"><use href="#bulb"/></svg><svg class="i"><use href="#sun"/></svg><svg class="i"><use href="#lock"/></svg><i class="swatch"></i><span>0</span><i class="car"></i></button>
      <div class="layrow"><svg class="i"><use href="#layB"/></svg><svg class="i"><use href="#layA"/></svg><svg class="i"><use href="#layB"/></svg><svg class="i"><use href="#layB"/></svg><svg class="i"><use href="#layA"/></svg><button>Make Current</button></div>
      <div class="layrow"><svg class="i"><use href="#layC"/></svg><svg class="i"><use href="#layA"/></svg><svg class="i"><use href="#layC"/></svg><svg class="i"><use href="#layC"/></svg><svg class="i"><use href="#layA"/></svg><button>Match Layer</button></div>
    </div></div><div class="name">Layers<i class="car"></i></div></div>
  <div class="panel clip"><div class="body"><button class="big"><svg><use href="#paste"/></svg>Paste<i class="car"></i></button>
    <div class="rows"><svg class="i"><use href="#cut"/></svg><svg class="i"><use href="#docs"/></svg><svg class="i"><use href="#list"/></svg></div></div><div class="name">Clipboard</div></div>
</section>

<nav class="filetabs">
  <svg class="i"><use href="#burger"/></svg><i class="slash"></i><button>Start</button>
  <button class="on"><b>IOWA-006 - CIVIL BASE*</b><svg class="s"><use href="#x"/></svg></button>
  <svg class="i"><use href="#plus"/></svg><i class="slash"></i>
</nav>

<main class="work">
  <aside class="toolspace">
    <div class="tscol">
      <h2 class="ptitle">TOOLSPACE</h2>
      <div class="tsbar"><svg class="i" viewBox="0 0 16 16"><path fill="#f2f5f3" d="M1 1h14v14H1z"/><path fill="#4ecb70" d="M3 6l3-3h7v7l-3 3H3z"/></svg>
        <span></span><svg class="i" viewBox="0 0 16 16"><path fill="#dfe3e7" d="M1 2h6v5H1zM8 8h7v6H8zM9 3h4v3H9zM3 9h3v3H3z"/></svg><svg class="i" viewBox="0 0 16 16"><path fill="#dfe3e7" d="M0 1h16v4H5v10H0zM6 6h10v9H6z"/></svg><svg class="i"><use href="#help"/></svg></div>
      <div class="viewsel"><select aria-label="Toolspace view"><option>Active Drawing View</option></select><i class="chev"></i></div>
      <div class="treebox">
        <div class="treemid">
          <div class="clipper">
            <ul class="tree">
              <li class="l0"><i class="box">−</i><svg class="i"><use href="#tDoc"/></svg><b>IOWA-006 - CIVIL BASE</b></li>
              <li class="l1"><i></i><svg class="i"><use href="#tPt"/></svg>Points</li>
              <li class="l1"><i></i><svg class="i"><use href="#tPg"/></svg>Point Groups</li>
              <li class="l1"><i class="box">−</i><svg class="i"><use href="#tSurf"/></svg>Surfaces</li>
              <li class="l2 eg"><i class="box">+</i><svg class="i"><use href="#tSurf"/></svg><em></em>IOWA-006-EG</li>
              <li class="l1"><i class="box">−</i><svg class="i"><use href="#tAl"/></svg>Alignments</li>
              <li class="l2"><i></i><svg class="i"><use href="#tAl"/></svg>Centerline Alignments</li>
              <li class="l2"><i></i><svg class="i"><use href="#tOff"/></svg>Offset Alignments</li>
              <li class="l2"><i></i><svg class="i"><use href="#tCurb"/></svg>Curb Return Alignments</li>
              <li class="l2"><i></i><svg class="i"><use href="#tRail"/></svg>Rail Alignments</li>
              <li class="l2"><i></i><svg class="i"><use href="#tRail"/></svg>Rail Diverted Alignments</li>
              <li class="l2"><i></i><svg class="i"><use href="#tAl"/></svg>Miscellaneous Alignments</li>
              <li class="l1"><i></i><svg class="i"><use href="#tFeat"/></svg>Feature Lines</li>
              <li class="l1"><i></i><svg class="i"><use href="#tSite"/></svg>Sites</li>
              <li class="l1"><i class="box">+</i><svg class="i"><use href="#tTurn"/></svg>Turnouts and Crossovers</li>
              <li class="l1"><i></i><svg class="i"><use href="#tCat"/></svg>Catchments</li>
              <li class="l1"><i class="box">+</i><svg class="i"><use href="#tPipe"/></svg>Pipe Networks</li>
              <li class="l1"><i></i><svg class="i"><use href="#tPipe"/></svg>Pressure Networks</li>
              <li class="l1"><i></i><svg class="i"><use href="#tBr"/></svg>Bridges</li>
              <li class="l1"><i></i><svg class="i"><use href="#tCor"/></svg>Corridors</li>
              <li class="l1"><i class="box">+</i><svg class="i"><use href="#tAsm"/></svg>Assemblies</li>
              <li class="l1"><i></i><svg class="i"><use href="#tSub"/></svg>Subassemblies</li>
              <li class="l1"><i></i><svg class="i"><use href="#tInt"/></svg>Intersections</li>
              <li class="l1"><i class="box">+</i><svg class="i"><use href="#tSv"/></svg>Survey</li>
              <li class="l1"><i></i><svg class="i"><use href="#tVf"/></svg>View Frame Groups</li>
              <li class="l0"><i class="box">−</i><svg class="i"><use href="#tDb"/></svg>Data Shortcuts [C:\Civil 3D Projec</li>
            </ul>
          </div>
          <div class="vscroll"><i class="chev up"></i><span></span><i class="chev"></i></div>
        </div>
        <div class="hscroll"><i class="chev left"></i><span></span><i class="chev right"></i></div>
      </div>
      <div class="preview"></div>
    </div>
    <div class="vtabs"><button class="on">Prospector</button><button>Settings</button><button>Toolbox</button></div>
  </aside>

  <section class="canvas">
    <svg class="drawing" viewBox="185 136 862 535" preserveAspectRatio="xMinYMin slice" fill="none">
      <g><path fill="#078a12" d="M306 141h20v67h-20z"/>
        <path stroke="#0a4411" d="M306 150.500h20M306 161.500h20M306 170.500h20M306 178.500h20M306 188.500h20M306 199.500h20"/>
        <path stroke="#0fd01f" stroke-dasharray="2 1 4 1" d="M308 144.500h17M307 146.500h18M308 154.500h17M307 156.500h15M308 165.500h12M308 173.500h16M307 175.500h17M308 183.500h12M308 192.500h16M307 194.500h18M308 203.500h11"/></g>
      <g stroke="#cdd2d6"><path d="M199.500 624v33M203 657.500h32M196.500 654.500h6v6h-6z"/></g>
      <g stroke="#dfe3e6"><path d="M189 151l3 3M194 151l3 3M189 157h3v3h-3zM194 156h3v3h-3z" stroke-width="1.600"/></g>

      <g stroke="#56182a">
        <path stroke-width="4" d="M606.500 136v535"/><path stroke="#7d1c2c" d="M604.500 136v240M608.500 300v170M603.500 480v190"/>
        <path stroke-width="1.500" stroke="#6b1d32" d="M643.500 136v435l8 60 6 38"/><path stroke="#8b4152" d="M645 275v180"/>
      </g>
      <g stroke="#6c7073">
        <path stroke="#888c8e" d="M603.500 136v192M617.500 150v460M619.500 136v200M638.500 445v225M640.500 500v170"/>
        <path d="M614 136l4 30 1 60-2 130M611 136l3 50-4 60-2 70M609 136l-1 60M616 136v500"/>
        <path stroke-width="5" stroke="#575b5e" d="M632 136l-1 90 2 40"/><path d="M628 136v100l6 60-3 60M637 136l-3 110-4 110M629 280l5 24 7 50M636 304l8-55M638 320l6-75"/>
        <path d="M630 380v290M634 500l-4 44v120M632 495c3-5 6 0 5 6v150M627 500l3 44 4-9M616 490l-2 35-3 20-5-4-3 50-3 6M606 587l6 30 4 3M617 600c-2 18-8 23-36 23M581 628h33c5 1 6 5 6 42M597 617v10"/>
        <path d="M620 586c4 15 8 22 12 21M633 570l10 60 9 42M643 570c7 20 8 30 8 45M632 640c8-2 9 12 12 30"/>
      </g>
      <g stroke="#63686b" transform="translate(560 130) scale(.3333)" stroke-width="3">
        <path d="M96 54l32-36M94 92l34-36M94 130l34-32M97 164l30-16M95 198l32-12M96 233h32M95 284l33-3M95 338l4-6 30-8M89 424l40-50M91 485l48-44M112 600v-60l16-14M218 200l16-35 14-24M218 240l24-60 23-24M218 290l22-76 45-36M220 340l24-104 14-16 28-8M222 380l24-130 42-2M223 440l30-150 12-5 27-2M222 520l24-120 46-78M232 570l18-120 42-86M240 640l22-160 34-70M252 640l26-130 20-36M255 428h40M275 690l20-30 3-46"/>
        <path d="M160 50l26 24 22-24M148 80l28-30 32 30M145 280l22-70 20 34 22-40M150 330l12-30h12l26 40M140 500l22-105 26 50 20-60M150 545l6-80 16 6 18 40M148 620l10-40 8 100M205 535l20 120M146 30l-8 260M154 20l-8 260M210 30l4 300M225 115l-14 110"/>
        <path d="M0 680l54 5 78-90M12 680l48-80"/>
      </g>
      <g stroke="#23236b" stroke-width="2"><path d="M627 136v535"/></g><path stroke="#3b3f93" d="M625.500 136v535"/>
      <g stroke="#a8b321"><path stroke-width="1.500" d="M622.500 136v535"/><path stroke="#d2dc2e" stroke-dasharray="1 1" stroke-width="3" d="M622 245v17M621 503v20"/><path stroke="#8b9425" d="M606 158l10 5 8-5 10 5 10-5"/><path stroke-dasharray="2 1" stroke-width="1.500" d="M615.500 162v22M633.500 162v22M602 214v9M647 293v20M641 488v22"/>
        <path stroke-width="1.500" stroke="#b4bd28" d="M660 183.500h5M583 237.500h5M571 510.500h5M685 505.500h5M661 363h5M632 368.500h11"/></g>

      <g transform="translate(410 320) scale(.3333)" stroke="#65696b" stroke-width="2.500">
        <g stroke="#4d5255">
          <use href="#ra" y="13" stroke-width="26"/><use href="#rb" y="13" stroke-width="26"/><use href="#rc" y="11" stroke-width="22"/><use href="#rd" y="15" stroke-width="30"/><use href="#re" y="9" stroke-width="18"/><use href="#rf" y="16" stroke-width="32"/>
          <path stroke-width="12" d="M38 205l42-8 22 16 6 50 14 16 16-14 0-30 14-18M182 250l-2 80"/>
          <path stroke-width="14" d="M600 180l4 80M670 250v60"/>
        </g>
        <path id="ra" d="M130 235l46-38 40-14 62-10 110 3 70 35 60 30 68 20 34 18"/>
        <use href="#ra" y="5"/><use href="#ra" y="10"/><use href="#ra" y="15"/><use href="#ra" y="20"/><use href="#ra" y="25"/>
        <path id="rb" d="M152 235l50-15 92-14 96 18 70 34 70 36 52 58"/>
        <use href="#rb" y="5"/><use href="#rb" y="10"/><use href="#rb" y="15"/><use href="#rb" y="20"/><use href="#rb" x="-3" y="26"/>
        <path d="M270 200h110M230 188l160-5 60 30M430 200l55 25M480 232l100 35M520 250l60 50"/>
        <path d="M38 195l42-20M90 180l20-24 36-20 60 40M96 190l20-24 30-16 50 42M102 198l20-20 24-8 40 42M108 206l20-16 20 0 30 30M80 172l60-38 80 50M150 140l36 80M160 140l20 80M186 150l-10 60M36 205l20 15 20-10 22 60 20 18 30-48M60 200l30 10 14 60 20-10M70 194l30 10 14 56 20-14M80 210l32-12 6 70M44 210v12l20-12M172 250l2 80M178 250v80M184 250l-4 85M190 250l-4 70M170 260l6 74"/>
        <path d="M80 148l60-14 80 38 120-4 60-20 70 8M85 115l60-2 90 30 100 0 90-10 90-10M88 92l70 4 76 28h40l70-44M108 72l54 8 80 42 100-10 30-50M240 122l80-40M90 130l40-10M300 130l80-76M400 120l40-64M360 128l80-80M468 108l42-78M504 116l74-80M560 20v30l18-10M220 70l40 6 20-12M535 165l-50 2-24-12"/>
        <path d="M545 200l20 35 40 35M540 185l30-65 28-70 8-50M548 180l30-60 26-70M552 188l28-58 28-74M556 196l30-60 22-80M560 204l30-60 20-60M566 212l26-60 20-40M574 222l24-60 14-40M582 232l20-60 12-30M590 244l16-60 10-30"/>
        <path d="M200 240l-30 120-10 8M178 368l22-18-10-80 30 50 60-18-5-30 20-2M428 330l4-30 40-16 80 50-10-30M428 330l30 58 60-10M480 280l60 60 34 70M550 445h26l20-14 14 66M575 350l20 80 14 60M590 460l18-60M205 250l34-12M285 290l30-40"/>
        <path stroke="#999d9f" d="M218 252l315 113M255 94l250 22 75-82M250 138h238M270 62l300-12M690 256l440 66h165l10-6M732 350l140 82 260 40h156M615 290l15-8h30l10 8M615 322l15 8h30l10-8"/>
        <path id="rc" d="M680 285h60l60-15 50 10 60 25 60 18 110 5 110 2 110 30"/>
        <use href="#rc" y="6"/><use href="#rc" y="12"/><use href="#rc" y="18"/><use href="#rc" y="23"/>
        <path id="rd" d="M680 322l100 3 50-5 40 40 60 40 70 4 40-60 60-26 70 12 120 20"/>
        <use href="#rd" y="6"/><use href="#rd" y="12"/><use href="#rd" y="18"/><use href="#rd" y="24"/><use href="#rd" y="30"/>
        <path id="re" d="M800 275l60 60 80 30 50-6 50-35 240 45"/><use href="#re" y="6"/><use href="#re" y="12"/><use href="#re" y="18"/>
        <path id="rf" d="M1030 395l60-22 100-5 94 20"/><use href="#rf" y="6"/><use href="#rf" y="12"/><use href="#rf" y="18"/><use href="#rf" y="24"/><use href="#rf" y="30"/>
        <path d="M670 250l40-60 22-50 8-100M664 245l24-90 4-110M660 0l10 120h16l14-120M735 280l40-40 50-22h34l20 50 60 4 60-10 70 22 100 2M1092 202l130 12 50 26M1205 330l15-16h24l6 18M1280 300l12-8v30M1290 290l10 20M1150 285l80 40"/>
        <path d="M690 355h60l-40 130-6 60M800 380l-25 60 12 24-24 46-40 0 20-80M714 600l20-60 90-66 80 16 36 24 12-70-80-8 20-30M802 572l8-20 18-14 22 10M1032 568l44-80-14-8 8-38 60 14 130-14 10 66M1106 476l18 14 80 8 40-12-2 54-60-6-28-28 56-14M1100 410l20 14 30-10M770 345l20 35M670 400l15 100M664 420l20 160M670 520l14-4v84"/>
      </g>
      <g stroke="#6d116f" stroke-width="1.300">
        <path d="M436 363l24-8 30-6 40-7 65-4 6 14v108l-8 8-30-18-8-12-50-27-20 6-18 12"/>
        <path d="M643 395v42M638 385l14-7 8 0 16 9 30 19 137-8M641 438l12-2 40 26 40 8 56 11h50"/>
      </g>
      <g stroke="#9fa82b" stroke-dasharray="3 1" stroke-width="1.500">
        <path d="M539 338l24-1M542 346h5M528 356l20 1M520 367h22M521 417l20 7M548 436l6 2M705 415l22 4M726 407h7M765 470l22 5M733 470h6"/>
      </g>
      <g stroke="#c0cc28" stroke-dasharray="2 1" stroke-width="2"><path d="M618 414v16M622 413v18M630 414v16M610 405l3 7M611 436l3-7M632 412l3-6M632 430l3 6"/></g>
      <path stroke="#169ba0" stroke-width="3" stroke-dasharray="2 1" d="M627 632v9"/>
    </svg>
    <span class="vlabel">[−][Top][2D Wireframe]</span>
    <span class="ax y">Y</span><span class="ax xx">X</span>
    <div class="viewcube"><b class="n">N</b><b class="wst">W</b><button>TOP</button><b class="e">E</b><b class="so">S</b></div>
    <button class="wcs">WCS ▽</button>
    <div class="navbar">
      <svg viewBox="0 0 16 16"><circle cx="8" cy="8" r="7"/><circle cx="8" cy="8" r="3.500"/><path d="M3 13h12"/></svg>
      <svg viewBox="0 0 16 16"><path d="M5 15l-4-6 2-1 2 2V3h2v5-6h2v6-5h2v6-3h2v5l-2 4z"/></svg>
      <svg viewBox="0 0 16 16"><path d="M1 1l12 9M13 1L2 12"/><circle cx="12" cy="12" r="3.500"/></svg>
      <svg viewBox="0 0 16 16"><path d="M8 1v14M5 4l3-3 3 3M5 12l3 3 3-3"/><ellipse cx="8" cy="8" rx="7" ry="3"/></svg>
      <svg viewBox="0 0 16 16"><path d="M1 1h4v4H1zM6 1h4v4H6zM11 1h4v4h-4zM1 7h11v8H1zM5 9l4 2-4 2z"/></svg>
    </div>
    <div class="cmd"><i class="grip"></i><svg class="s"><use href="#x"/></svg><svg class="i" viewBox="0 0 16 16"><path stroke="#d5d9dd" stroke-width="3" d="M1 15l8-8"/><path fill="none" stroke="#d5d9dd" stroke-width="2.500" d="M10 2c-3 3 1 7 5 4"/></svg>
      <div class="cmdbar"><svg class="i" viewBox="0 0 16 16"><path fill="#cfd2d3" stroke="#444b52" stroke-width="1.300" d="M1 2h14v12H1z"/><path fill="none" stroke="#444b52" stroke-width="1.300" d="M3 6l3 2-3 2M7 11h4M1 4h14"/></svg><i class="car ink"></i><input type="text" placeholder="Type a command" aria-label="Command line"><i class="car up ink"></i></div></div>
  </section>

  <div class="snapbar"><div>
    <i class="grip"></i>
    <svg><use href="#snapA"/></svg><svg><use href="#snapB"/></svg><svg><use href="#snapC"/></svg><svg><use href="#snapC"/></svg><svg><use href="#table"/></svg><svg><use href="#globe"/></svg><svg><use href="#globe"/></svg><svg><use href="#snapD"/></svg><svg><use href="#snapD"/></svg><svg><use href="#snapE"/></svg><svg><use href="#snapD"/></svg><svg><use href="#snapC"/></svg><svg><use href="#snapP"/></svg>
    <hr><svg><use href="#snapE"/></svg><hr>
    <svg><use href="#snapF"/></svg><svg><use href="#snapF"/></svg><svg><use href="#snapF"/></svg><hr>
    <svg><use href="#snapG"/></svg><svg><use href="#snapG"/></svg><svg><use href="#snapB"/></svg><svg><use href="#snapB"/></svg><svg><use href="#snapH"/></svg><svg><use href="#snapE"/></svg><svg><use href="#snapC"/></svg><hr>
    <svg><use href="#snapE"/></svg><svg><use href="#snapE"/></svg><svg><use href="#snapE"/></svg>
  </div></div>

  <aside class="props">
    <div class="vtabs"><button class="on">Design</button><button>Display</button><button>Extended Data</button><button>Object Class</button></div>
    <div class="pcol">
      <h2 class="ptitle">PROPERTIES</h2>
      <div class="selrow"><button class="selcombo">No selection<i class="car"></i></button>
        <svg class="i" viewBox="0 0 16 16"><path fill="#5fb0e4" d="M1 3h8v8H1zM5 7h8v8H5z"/><path stroke="#5bdb88" stroke-width="2.500" d="M12 0v8M8 4h8"/></svg><svg class="i" viewBox="0 0 16 16"><path fill="none" stroke="#5bdb88" stroke-width="2" stroke-dasharray="2 1" d="M1 2h12v9H1z"/><path fill="#45a868" d="M3 4h7v6H3z"/><path fill="#fff" d="M8 4l7 7-3 1 1 3-2 1-1-4-2 2z"/></svg><svg class="i" viewBox="0 0 16 16"><path fill="#f2c765" d="M8 0l3 5H9l2 5-5-5h2z"/><path fill="#fff" d="M0 3l6 6H4l1 4-2 1-1-4-2 1z"/><path fill="#e3e6e9" d="M8 7h8v8H8z"/><path fill="#4f9ace" d="M10 10h4v3h-4z"/></svg></div>
      <div class="plist">
        <section><h3>General<i class="car"></i></h3><table class="r7">
          <tr><th>Color</th><td><i class="swatch"></i>ByLayer</td></tr><tr><th>Layer</th><td>0</td></tr><tr><th>Linetype</th><td><i class="rule"></i>ByLayer</td></tr><tr><th>Linetype scale</th><td>1.00</td></tr><tr><th>Lineweight</th><td><i class="rule"></i>ByLayer</td></tr><tr><th>Transparency</th><td>ByLayer</td></tr><tr><th>Thickness</th><td>0.00</td></tr></table></section>
        <section><h3>3D Visualization<i class="car"></i></h3><table class="r1"><tr><th>Material</th><td>ByLayer</td></tr></table></section>
        <section><h3>Plot style<i class="car"></i></h3><table class="r4"><tr><th>Plot style</th><td class="dim">ByColor</td></tr><tr><th>Plot style table</th><td>C:\Users\David\ap...</td></tr><tr><th>Plot table attached to</th><td class="dim">Model</td></tr><tr><th>Plot table type</th><td class="dim">Not available</td></tr></table></section>
        <section><h3>View<i class="car"></i></h3><table class="r5"><tr><th>Center X</th><td class="dim">2280591.66</td></tr><tr><th>Center Y</th><td class="dim">306840.00</td></tr><tr><th>Center Z</th><td class="dim">0.00</td></tr><tr><th>Height</th><td class="dim">952.17</td></tr><tr><th>Width</th><td class="dim">2149.22</td></tr></table></section>
        <section><h3>Misc<i class="car"></i></h3><table class="r6"><tr><th>Annotation scale</th><td>1"=10'</td></tr><tr><th>UCS icon On</th><td>Yes</td></tr><tr><th>UCS icon at origin</th><td>No</td></tr><tr><th>UCS per viewport</th><td>Yes</td></tr><tr><th>UCS Name</th><td></td></tr><tr><th>Visual Style</th><td>2D Wireframe</td></tr></table></section>
      </div>
    </div>
  </aside>
</main>

<footer class="status">
  <svg class="i"><use href="#burger"/></svg>
  <button class="on"><b>Model</b></button><button>24X36</button><i class="slash"></i><button>24X36 P&amp;P 50 SCALE</button><i class="slash"></i><button>24X36 XSECTION 50SCALE</button><i class="slash"></i><button>24X36 XSECTION 10SCALE</button><i class="slash"></i><svg class="i"><use href="#plus"/></svg><i class="slash"></i>
  <div class="tray">
    <span class="t">MODEL</span><span class="c"><svg><use href="#gridi"/></svg></span><span class="c"><svg><use href="#dots"/></svg></span><i class="car"></i>
    <span class="c"><svg><use href="#ortho"/></svg></span><span class="c"><svg><use href="#polar"/></svg></span><span class="c hi"><svg><use href="#osnap"/></svg></span><i class="car"></i>
    <span class="c hi"><svg><use href="#annox"/></svg></span><span class="c"><svg><use href="#annox"/></svg></span><span class="c"><svg><use href="#anno"/></svg></span><span class="t">1"=10'</span><i class="car"></i>
    <span class="c"><svg><use href="#plus"/></svg></span><span class="c"><svg viewBox="0 0 16 16"><circle cx="8" cy="8" r="5" fill="#61ade0"/><path fill="#dfe3e7" d="M8 1l6 4-6 3-6-3zM8 9l6 2-6 4-6-4z"/></svg></span><span class="t">3.50</span>
    <span class="c"><svg viewBox="0 0 16 16"><path fill="none" stroke="#dfe3e7" stroke-width="1.500" d="M5 1H1v4M15 11v4h-4M1 11v4h4M11 1h4v4"/><path fill="#dfe3e7" d="M4 12l2-6 6-2-2 6z"/></svg></span><i class="car"></i><span class="c hi"><svg><use href="#tag"/></svg></span>
    <span class="c"><svg viewBox="0 0 16 16"><path fill="#6fb6e3" d="M2 1h6v11H2z"/><path fill="#e0c463" d="M8 5h6v5H8z"/><path stroke="#5cc878" stroke-width="2.500" fill="none" d="M6 11l3 3 6-6"/></svg></span><span class="c nr"><svg viewBox="0 0 16 16"><path fill="#2362e0" d="M1 1h14v14H1z"/><circle cx="8" cy="8" r="4" fill="#0a1537"/></svg></span><span class="c"><svg viewBox="0 0 16 16"><path fill="none" stroke="#c98f76" stroke-width="1.500" d="M1 3h5v10h9v-5H6M1 3v6"/></svg></span><span class="c gapl"><svg viewBox="0 0 16 16"><path fill="none" stroke="#dfe3e7" stroke-width="1.500" d="M1 2h14v12H1z"/><path fill="#dfe3e7" d="M9 4h4v4zM3 12V8l4 4z"/></svg></span><span class="c"><svg><use href="#burger"/></svg></span>
  </div>
</footer>

<footer class="taskbar">
  <button class="start" aria-label="Start"><svg viewBox="0 0 16 16"><path fill="#111" d="M1 3l6-1v6H1zM8 2l7-1v7H8zM1 9h6v6l-6-1zM8 9h7v7l-7-1z"/></svg></button>
  <label class="search"><svg viewBox="0 0 16 16"><circle cx="10" cy="6" r="5" fill="none" stroke="#222" stroke-width="1.300"/><path stroke="#222" stroke-width="1.500" d="M1 15l5-5"/></svg><input type="text" placeholder="Type here to search"><span><svg viewBox="0 0 32 28"><path fill="none" stroke="#3d2a18" stroke-width="3" d="M11 6V2h10v4"/><path fill="#d58a1c" d="M1 6h30v21H1z"/><path fill="#a35f11" d="M1 16h30v11H1z"/><path fill="#ffd75a" d="M13 12h6v7h-6z"/></svg></span></label>
  <div class="apps">
    <a class="run"><svg viewBox="0 0 16 16"><path fill="#f0b93c" d="M1 2h6l1 2h7v11H1z"/><path fill="#ffe08a" d="M1 6h14v7H1z"/><path fill="#4da4e0" d="M3 10h10v5h-2v-3H5v3H3z"/></svg></a>
    <a><svg viewBox="0 0 16 16"><path fill="#28a0e5" d="M5 1h9v13H5z"/><path fill="#0c5bab" d="M8 7h8v8H8z"/><path fill="#0e6fc8" d="M0 4h8v8H0z"/><circle cx="4" cy="8" r="2" fill="none" stroke="#fff"/></svg></a>
    <a><svg viewBox="0 0 16 16"><circle cx="8" cy="8" r="7.500" fill="#e5b92e"/><path fill="#dc4437" d="M1.500 4.500a7.500 7.500 0 0 1 13 0L8 8z"/><path fill="#2fa052" d="M1.500 4.500a7.500 7.500 0 0 0 6 11L8 8z"/><circle cx="8" cy="8" r="3.300" fill="#3d7de8" stroke="#fff"/></svg></a>
    <a><svg viewBox="0 0 16 16"><path fill="#22a366" d="M4 1h12v14H4z"/><path fill="#107c41" d="M9 8h7v7H9zM0 4h9v8H0z"/><text x="2" y="11" font-size="8" fill="#fff" font-weight="bold">X</text></svg></a>
    <a class="run"><svg viewBox="0 0 16 16"><path fill="#41a5ee" d="M4 1h12v5H4z"/><path fill="#2166c4" d="M4 6h12v5H4z"/><path fill="#103f91" d="M4 11h12v4H4zM0 4h9v8H0z"/><text x="0.500" y="11" font-size="8" fill="#fff" font-weight="bold">W</text></svg></a>
    <a><svg viewBox="0 0 16 16"><circle cx="8" cy="8" r="8" fill="#79a6d8"/><text x="4" y="12" font-size="11" fill="#e8f1fa">R</text></svg></a>
    <a><svg viewBox="0 0 16 16"><circle cx="8" cy="8" r="6" fill="#fff" stroke="#6aab3b" stroke-width="3"/><path stroke="#e6b12f" stroke-width="3" d="M8 8l7 7"/></svg></a>
    <a><svg viewBox="0 0 16 16"><path fill="#7b83eb" d="M8 6h8v8H8z"/><circle cx="9" cy="3" r="2.500" fill="#7b83eb"/><circle cx="14" cy="4" r="1.700" fill="#5059c9"/><path fill="#4b53bc" d="M0 4h9v9H0z"/><text x="2" y="11" font-size="7" fill="#fff" font-weight="bold">T</text></svg></a>
    <a><svg viewBox="0 0 16 16"><path fill="#fff" stroke="#bbb" stroke-width=".7" d="M3 1h7l3 3v11H3z"/></svg></a>
    <a><svg viewBox="0 0 16 16"><path fill="none" stroke="#111" stroke-width="2.500" d="M1 2h9L3 14h11"/><path fill="none" stroke="#1fa5a0" stroke-width="2.500" d="M15 1L6 9l8 5"/><path stroke="#c33" stroke-width="2" d="M1 2l5 4"/></svg></a>
    <a class="run"><svg viewBox="0 0 16 16"><circle cx="7" cy="7" r="6.500" fill="#222"/><circle cx="7" cy="7" r="3" fill="#777"/><circle cx="12" cy="11.500" r="4" fill="#e32222"/></svg></a>
    <a><svg viewBox="0 0 16 16"><path fill="#5a6d7d" d="M2 0h12v16H2z"/><path fill="#a9d8ee" d="M4 2h8v3H4z"/><path stroke="#dce5ea" stroke-width="2" stroke-dasharray="2 1" d="M4 8h8M4 11h8M4 14h8"/></svg></a>
    <a><svg viewBox="0 0 16 16"><path fill="#88c1cc" d="M4 1l11 3-3 11-11-3z"/><path fill="#d6eef2" d="M5 4l8 2-1 5z"/></svg></a>
    <a><svg viewBox="0 0 16 16"><rect width="16" height="16" x="0" rx="3" fill="#b5121b"/><path fill="none" stroke="#fff" stroke-width="1.300" d="M3 12c5-3 6-9 5-9s0 6 5 6c-4-1-9 1-10 3z"/></svg></a>
    <a><svg viewBox="0 0 16 16"><path fill="#274e7d" d="M0 6l4-4h8l4 4v9H0z"/><path fill="#f0e8cc" d="M3 6l5-4 5 4-3 2z"/><path fill="#c7a65a" d="M0 11l8-2 8 3v3H0z"/></svg></a>
    <a class="run cur"><svg viewBox="0 0 16 16"><path fill="#a3157c" d="M1 0h14v16H1z"/><path fill="#6e0c55" d="M1 0h3v16H1z"/><text x="5" y="9" font-size="9" fill="#fff" font-weight="bold">C</text><path stroke="#fff" d="M5 13h7"/></svg></a>
    <a><svg viewBox="0 0 16 16"><path fill="#dcebf5" d="M0 0h16v16H0z"/><path fill="none" stroke="#1b6ba8" stroke-width="2.500" d="M3 13L8 2l5 11M5 9h6"/></svg></a>
    <a><svg viewBox="0 0 16 16"><path fill="#13998f" d="M0 2l3-2h10l3 2v13H0z"/><path fill="none" stroke="#bce8e2" stroke-width="1.500" d="M2 5h12M2 12V8l2 3 2-3v4M8 12V8h2v4M12 12V8l2 4V8"/></svg></a>
    <a><svg viewBox="0 0 16 16"><path fill="#a5cfe9" d="M1 1h14v14H1z"/><circle cx="7" cy="8" r="5" fill="#ee8a2f"/><path fill="#fff" d="M6 5l4 3-4 3z"/></svg></a>
    <a><svg viewBox="0 0 16 16"><ellipse cx="7" cy="6" rx="6.500" ry="5" fill="#f3e9e9" stroke="#cf6a69"/><path stroke="#3188ca" stroke-width="1.700" d="M8 4l5 11M14 6l-6 7"/></svg></a>
    <a><svg viewBox="0 0 16 16"><path fill="#333" d="M0 0h16v16H0z"/><path fill="#ffe034" d="M7 8h8l-5 7H7z"/></svg></a>
  </div>
  <div class="sys"><svg class="cloud" viewBox="0 0 18 14"><path fill="#9cb9ee" d="M4 13a4 4 0 0 1 0-8 5 5 0 0 1 9-1 4.500 4.500 0 0 1 1 9z"/></svg><span class="wx"><span>12°F</span><span>Cloudy</span></span>
    <i class="chev up"></i><svg viewBox="0 0 16 16"><rect x="5" y="0" width="6" height="10" rx="3" fill="#111"/><path stroke="#111" stroke-width="1.500" fill="none" d="M3 8c0 6 10 6 10 0M8 12v4"/></svg><svg viewBox="0 0 16 16"><rect x="2" y="4" width="9" height="9" rx="2" fill="none" stroke="#222" stroke-width="1.300"/><path fill="none" stroke="#222" d="M11 7l4-2v6l-4-2M5 1h6"/></svg><svg viewBox="0 0 16 16"><path fill="none" stroke="#222" stroke-width="1.200" d="M1 6h3l4-4v12l-4-4H1zM10 5c2 2 2 4 0 6M12 3c4 3 4 7 0 10"/></svg>
    <time>2:32 PM<br>1/22/2025</time>
    <span class="note"><svg viewBox="0 0 16 16"><path fill="#111" d="M0 1h15v11H6l-3 3v-3H0z"/><path stroke="#c8ede8" d="M3 4h9M3 7h9"/></svg><em>2</em></span></div>
</footer>
</body>
</html>
```
FILE: styles.css
```css
* { box-sizing: border-box; }
html, body { height: 100%; }
body { margin: 0; display: flex; flex-direction: column; min-height: 600px; overflow: hidden; background: #222933; color: #d9dde1; font: 8px/10px Roboto, "Open Sans", sans-serif; }
button, input, select { font: inherit; color: inherit; background: none; border: 0; padding: 0; margin: 0; border-radius: 0; }
button { white-space: nowrap; }
a { color: inherit; text-decoration: none; }
h2, h3, ul { margin: 0; padding: 0; font-size: 8px; }
svg { display: block; flex: none; }
i, em { font-style: normal; flex: none; }
.sprite { position: absolute; width: 0; height: 0; }
.i { width: 12px; height: 12px; }
.s { width: 6px; height: 6px; }
.w { width: 8px; height: 8px; }
.off { color: #5b6470; }
.pale { color: #c5cad0; }
.car { width: 0; height: 0; border: 2px solid transparent; border-top-color: #d9dde1; border-bottom: 0; }
.car.up { border: 2px solid transparent; border-bottom-color: #d9dde1; border-top: 0; }
.car.side { border: 2px solid transparent; border-left-color: #d9dde1; border-right: 0; }
.car.dim { border-top-color: #858d96; }
.car.ink { border-top-color: #343a40; }
.car.up.ink { border-top-color: transparent; border-bottom-color: #343a40; }
.slash { width: 1px; height: 10px; background: #4a535e; transform: skewX(-20deg); }
.swatch { display: inline-block; width: 10px; height: 10px; background: #fff; }
.chev { width: 5px; height: 5px; border: solid #444; border-width: 1px 1px 0 0; transform: rotate(135deg); }
.chev.up { transform: rotate(-45deg); }
.chev.left { transform: rotate(-135deg); }
.chev.right { transform: rotate(45deg); }

.titlebar { display: flex; align-items: center; height: 18px; flex: none; padding: 0 9px; gap: 4px; }
.applogo { width: 16px; height: 13px; background: #b3127f; color: #fff; font-weight: bold; line-height: 13px; }
.quick { display: flex; align-items: center; gap: 4px; margin: 0 0 0 3px; }
.workspace { display: flex; align-items: center; gap: 3px; width: 119px; height: 13px; padding: 0 2px; margin-left: -2px; background: #3d4656; }
.workspace span { flex: 1; text-align: left; }
.workspace .i { width: 11px; height: 11px; }
.share { display: flex; align-items: center; gap: 3px; color: #62b8ea; margin-left: 6px; }
.share .i { width: 11px; height: 11px; }
.doctitle { flex: 1; display: flex; justify-content: center; gap: 8px; white-space: nowrap; }
.keyword { width: 119px; height: 13px; padding: 0 2px; background: #434c5c; font-style: italic; }
.keyword::placeholder { color: #a9b0b8; }
.account { display: flex; align-items: center; gap: 3px; margin: 0 4px 0 1px; }
.titlebar .pale { width: 10px; height: 10px; }
.account .i, .titlebar > .i { width: 11px; height: 11px; }
.pair { display: flex; align-items: center; gap: 4px; }
.helpbox { border-left: 1px solid #4a535e; padding-left: 5px; margin-left: 0; }
.wins { display: flex; gap: 23px; margin: 0 2px 0 48px; }

.menubar { display: flex; align-items: center; height: 15px; flex: none; padding: 0 7px 0 9px; border-bottom: 1px solid #3a434e; color: #b9bfc5; }
.menubar div { display: flex; gap: 15px; margin-right: 15px; }
.menubar .tight { gap: 11px; margin-left: -3px; }
.menubar .docwins { gap: 13px; margin: 0 0 0 auto; }

.tabs { display: flex; align-items: center; height: 16px; flex: none; padding-left: 3px; color: #b9bfc5; }
.tabs button { height: 14px; padding: 0 6px 0 7px; margin-top: 2px; }
.tabs .on { background: #3b4450; color: #e6e9ec; }
.tabs .geo { background: #177490; color: #e6f3f7; border: 1px solid #2a8fab; padding: 0 5px; }
.shrink { width: 10px; height: 5px; background: #e6e9ec; margin: 2px 3px 0 14px; padding: 1px 3px; }
.shrink .car.up { display: block; border-bottom-color: #222933; }

.ribbon { display: flex; height: 66px; flex: none; background: #3b4450; position: relative; z-index: 5; }
.panel { display: flex; flex-direction: column; flex: none; border-right: 1px solid #29313c; padding-top: 3px; }
.body { display: flex; height: 49px; }
.name { display: flex; align-items: center; justify-content: center; gap: 3px; height: 14px; white-space: nowrap; }
.name .car { border-width: 3px 3px 0; border-color: #d9dde1 transparent transparent; }
.big { display: flex; flex-direction: column; align-items: center; justify-content: center; line-height: 10px; gap: 1px; }
.big svg { width: 22px; height: 22px; }
.sel { background: #2f516c; box-shadow: inset 0 0 0 1px #5d94bd; }
.rows { display: flex; flex-direction: column; }
.rows button { display: flex; align-items: center; gap: 4px; height: 16px; }
.palettes { width: 76px; padding-left: 2px; }
.palettes .big { width: 40px; height: 48px; padding-bottom: 4px; }
.minis { display: grid; grid-template-columns: 16px 16px; grid-auto-rows: 16px; }
.minis .i { width: 16px; height: 16px; padding: 2px; }
.explore { width: 36px; } .explore .big, .optimize .big { width: 100%; line-height: 10px; }
.optimize { width: 54px; }
.ground { width: 85px; } .ground .rows { padding-left: 14px; }
.design { width: 215px; }
.design .first { width: 73px; padding-left: 3px; }
.anchor { position: relative; width: 64px; }
.anchor .open { width: 64px; padding-left: 3px; gap: 2px; background: #252d38; }
.dropdown { position: absolute; left: 0; top: 16px; width: 181px; background: #475061; border: solid #525c6c; border-width: 0 1px; box-shadow: 1px 1px 3px #151a20; }
.dropdown button { display: flex; align-items: center; gap: 4px; width: 100%; height: 27px; padding-left: 2px; color: #e3e6ea; }
.dropdown svg { width: 20px; height: 20px; overflow: visible; }
.dropdown hr { margin: 0; height: 2px; border: 0; background: #3b4452; }
.pointer { position: absolute; left: 21px; top: 7px; width: 10px; height: 14px; }
.inters { padding-left: 4px; }
.rows.inters button { gap: 2px; }
.profile { width: 89px; } .profile .rows { padding-left: 9px; } .profile .rows button { gap: 3px; }
.profile .name { justify-content: flex-end; padding-right: 4px; }
.drawgrid { display: grid; grid-template-columns: 24px 26px 26px; grid-auto-rows: 16px; padding-left: 3px; }
.drawgrid span { display: flex; align-items: center; gap: 4px; }
.draw { width: 78px; }
.modify { width: 167px; }
.modgrid { display: grid; grid-template-columns: 48px 46px 51px 12px; grid-auto-rows: 16px; align-items: center; padding-left: 4px; }
.modgrid button { display: flex; align-items: center; gap: 3px; }
.modgrid button .car { margin-left: auto; margin-right: 11px; }
.layers { width: 182px; } .layers .big { width: 42px; }
.layers .rows { width: 138px; }
.rows .laycombo { height: 15px; margin-bottom: 1px; background: #4a5368; gap: 4px; padding: 0 3px; }
.laycombo span { flex: 1; text-align: left; }
.layrow { display: flex; align-items: center; height: 16px; gap: 4px; }
.clip { border: 0; width: 54px; } .clip .big { width: 35px; }
.clip .rows .i { margin: 2px; }

.filetabs { display: flex; align-items: center; height: 18px; flex: none; padding-left: 10px; gap: 8px; color: #e3e6e9; }
.filetabs .i { width: 11px; height: 11px; }
.filetabs .on { display: flex; align-items: center; gap: 6px; height: 18px; padding: 0 6px 0 8px; background: #3b4450; clip-path: polygon(6px 0, 100% 0, calc(100% - 6px) 100%, 0 100%); }
.filetabs .on .s { color: #b9bfc5; }

.work { display: flex; flex: 1; min-height: 0; border-top: 3px solid #3b4450; background: #3b4450; }
.toolspace { display: flex; width: 185px; flex: none; }
.tscol { display: flex; flex-direction: column; width: 169px; padding-bottom: 4px; }
.ptitle { height: 14px; flex: none; padding-left: 6px; font-weight: normal; line-height: 14px; background: #2e3643; border-left: 4px double #68717c; }
.tsbar { display: flex; align-items: center; gap: 7px; height: 20px; flex: none; padding: 0 4px 0 3px; }
.tsbar span { flex: 1; }
.viewsel { display: flex; align-items: center; height: 14px; flex: none; padding: 0 5px 0 2px; background: #e6e7e8; color: #1d1d1d; }
.viewsel select { flex: 1; appearance: none; }
.viewsel .chev { border-color: #555; }
.treebox { display: flex; flex-direction: column; flex: 1 1 354px; min-height: 0; margin-top: 2px; background: #fff; color: #1c1c1c; border: 1px solid #9ba1a8; }
.treemid { display: flex; flex: 1; min-height: 0; }
.clipper { flex: 1; overflow: hidden; min-width: 0; }
.tree { display: flex; flex-direction: column; height: calc(100% + 6px); list-style: none; }
.tree li { display: flex; align-items: center; flex: 1; min-height: 0; white-space: nowrap; gap: 4px; }
.tree li > i { width: 6px; height: 1px; background: #c3c3c3; }
.tree li > i.box { height: 6px; background: #fff; border: 1px solid #999; line-height: 4px; font-size: 6px; text-align: center; }
.tree .i { width: 11px; height: 11px; }
.l0 { padding-left: 6px; }
.l1 { padding-left: 19px; background: linear-gradient(90deg, transparent 9px, #c9c9c9 9px 10px, transparent 10px 22px, #c9c9c9 22px 23px, transparent 23px); }
.l2 { padding-left: 32px; background: linear-gradient(90deg, transparent 9px, #c9c9c9 9px 10px, transparent 10px 22px, #c9c9c9 22px 23px, transparent 23px 34px, #c9c9c9 34px 35px, transparent 35px); }
.tree em { width: 5px; height: 5px; margin: 4px 0 0 4px; border: 1px solid #777; }
.vscroll { display: flex; flex-direction: column; align-items: center; width: 11px; background: #f1f1f1; padding: 4px 0; }
.vscroll span { flex: 0 1 248px; width: 10px; background: #cdcdcd; margin: 0 0 auto; }
.hscroll { display: flex; align-items: center; height: 11px; flex: none; background: #f1f1f1; padding: 0 16px 0 5px; }
.hscroll span { width: 56px; height: 10px; background: #cdcdcd; margin: 0 auto 0 3px; }
.preview { flex: 0 1 123px; margin-top: 5px; border: 1px solid #8b9298; }
.vtabs { display: flex; flex-direction: column; width: 13px; padding-top: 15px; }
.vtabs button { height: 80px; margin-bottom: 1px; writing-mode: vertical-rl; transform: rotate(180deg); background: #2e3643; color: #b4bac1; text-align: center; line-height: 13px; }
.vtabs .on { background: #3b4450; color: #e3e6e9; box-shadow: inset 1px 0 #29313c; }

.canvas { position: relative; flex: 1; min-width: 0; background: #212830; overflow: hidden; }
.drawing { position: absolute; inset: 0; width: 100%; height: 100%; }
.vlabel { position: absolute; left: 3px; top: 4px; }
.ax { position: absolute; font: 14px/14px "Liberation Sans", sans-serif; color: #cdd2d6; }
.y { left: 14px; bottom: 47px; } .xx { left: 49px; bottom: 11px; }
.viewcube { position: absolute; right: 17px; top: 14px; width: 80px; height: 80px; border: 8px solid #41484f; border-radius: 50%; display: grid; place-items: center; }
.viewcube button { width: 34px; height: 34px; background: #bfc1c2; box-shadow: inset 0 0 0 6px #cbcccd; color: #4d5257; font-weight: bold; }
.viewcube b { position: absolute; font: bold 14px/14px "Liberation Sans", sans-serif; color: #bcc0c3; }
.n { top: -11px; } .so { bottom: -13px; } .wst { left: -13px; } .e { right: -11px; }
.wcs { position: absolute; right: 41px; top: 112px; width: 32px; height: 11px; border-radius: 3px; background: #a2a5aa; color: #e8eaec; border: 1px solid #b8bbbf; line-height: 9px; }
.navbar { position: absolute; right: 5px; top: 140px; width: 21px; height: 142px; border-radius: 3px; background: #71757a; display: flex; flex-direction: column; align-items: center; justify-content: space-around; padding: 9px 0 6px; }
.navbar svg { width: 16px; height: 16px; fill: none; stroke: #565b61; stroke-width: 1.300; }
.cmd { position: absolute; left: 90px; right: 92px; bottom: 1px; height: 16px; display: flex; align-items: center; gap: 6px; background: #2a3138; color: #c5cad0; }
.cmd .grip { width: 4px; height: 12px; border: dotted #8c9299; border-width: 0 1px; }
.cmd > .s { width: 7px; height: 7px; }
.cmd > .i { width: 11px; height: 11px; }
.cmdbar { flex: 1; display: flex; align-items: center; gap: 3px; height: 16px; padding: 0 3px 0 2px; margin-left: -1px; background: #bdc0c1; }
.cmdbar input { flex: 1; font: italic 8px/12px "Liberation Mono", monospace; color: #343a40; }
.cmdbar input::placeholder { color: #4d5358; }

.snapbar { width: 22px; flex: none; display: flex; flex-direction: column; padding-left: 2px; background: #343d48; }
.snapbar > div { display: flex; flex-direction: column; align-items: center; flex: 0 1 420px; min-height: 0; width: 16px; background: #3b4856; }
.snapbar svg { flex: 1 1 14px; width: 12px; height: 14px; min-height: 0; padding: 1px 0; }
.snapbar hr { width: 13px; height: 1px; border: 0; margin: 1px 0; background: #d5d9dd; }
.snapbar .grip { width: 10px; height: 2px; background: #68717c; margin: 2px 0; }

.props { display: flex; flex: none; width: 211px; }
.props .vtabs { width: 15px; }
.pcol { flex: 1; min-width: 0; }
.pcol .ptitle { padding-left: 5px; }
.selrow { display: flex; align-items: center; gap: 5px; height: 27px; padding: 6px 5px 0 4px; }
.selcombo { display: flex; align-items: center; justify-content: space-between; flex: 1; height: 14px; padding: 0 3px 0 2px; background: #4a5368; }
.plist { padding: 0 12px 0 6px; }
.plist section { margin-bottom: 3px; }
.plist h3 { display: flex; align-items: center; justify-content: space-between; height: 12px; padding: 0 5px 0 4px; background: #2b333f; color: #f0f2f4; }
.plist h3 .car { border-width: 3px 3px 0; border-color: #e6e9ec transparent transparent; }
table { width: 100%; table-layout: fixed; border-collapse: collapse; border-left: 11px solid #343c48; line-height: 9px; }
th, td { padding: 0 0 0 3px; font-weight: normal; text-align: left; border: solid #2f3743; border-width: 0 0 1px 1px; white-space: nowrap; overflow: hidden; }
th { width: 54%; padding-left: 5px; color: #c3c8cd; }
.dim { color: #8d949c; }
td { vertical-align: middle; padding-left: 2px; }
td .swatch { height: 9px; width: 9px; margin-right: 4px; vertical-align: middle; }
.rule { display: inline-block; width: 36px; height: 1px; background: #c3c8cd; margin-right: 3px; vertical-align: middle; }
.r7 { height: 89px; } .r1 { height: 13px; } .r4 { height: 51px; } .r5 { height: 64px; } .r6 { height: 76px; }

.status { display: flex; align-items: center; height: 23px; flex: none; padding-left: 10px; border-top: 3px solid #3b4450; gap: 7px; white-space: nowrap; color: #e0e3e6; }
.status > .i { width: 11px; height: 11px; }
.status .on { height: 18px; padding: 0 9px 0 10px; background: #3b4450; clip-path: polygon(6px 0, 100% 0, calc(100% - 6px) 100%, 0 100%); }
.status .slash { margin: 0 -2px; }
.tray { display: flex; align-items: center; margin-left: auto; }
.tray .t { height: 16px; line-height: 16px; padding: 0 2px; background: #323b47; }
.c { display: grid; place-items: center; width: 17px; height: 17px; }
.c svg { width: 12px; height: 12px; }
.c.nr svg { width: 8px; height: 8px; }
.c.hi { background: #5b8fbd; width: 15px; }
.c.gapl { margin-left: 3px; }
.tray .car { margin: 0 5px 0 4px; }

.taskbar { display: flex; align-items: center; height: 26px; flex: none; background: #c8ede8; color: #1a1a1a; font-size: 10px; }
.start { width: 33px; display: grid; place-items: center; }
.start svg { width: 13px; height: 13px; }
.search { display: flex; align-items: center; width: 190px; height: 26px; background: #fdfefe; padding-left: 7px; }
.search > svg { width: 12px; height: 12px; }
.search input { flex: 1; min-width: 0; margin-left: 7px; }
.search input::placeholder { color: #333; }
.search span { display: grid; place-items: center; width: 48px; height: 22px; margin-right: 3px; background: #efefef; border-radius: 3px; }
.search span svg { width: 22px; height: 19px; }
.apps { display: grid; grid-template-columns: repeat(21, 1fr); flex: 0 1 686px; margin-left: 2px; }
.apps a { display: grid; place-items: center; height: 26px; border-bottom: 2px solid transparent; }
.apps a.run { border-bottom-color: #405a5c; background-clip: padding-box; }
.apps a.cur { background: #f2fbfa; }
.apps svg { width: 17px; height: 17px; font-family: "Liberation Sans", sans-serif; }
.sys { display: flex; align-items: center; gap: 5px; margin-left: auto; padding-right: 15px; }
.sys svg { width: 12px; height: 13px; }
.sys .cloud { width: 16px; height: 13px; }
.wx { display: flex; gap: 6px; margin-right: 10px; }
.sys .chev { width: 6px; height: 6px; margin: 3px 2px 0 0; }
time { font-size: 8px; line-height: 14px; text-align: center; }
.note { position: relative; margin-left: 5px; }
.note em { position: absolute; right: -5px; bottom: -3px; width: 10px; height: 10px; border-radius: 50%; background: #c9d6d4; border: 1px solid #667; font-size: 7px; line-height: 8px; text-align: center; }
```
